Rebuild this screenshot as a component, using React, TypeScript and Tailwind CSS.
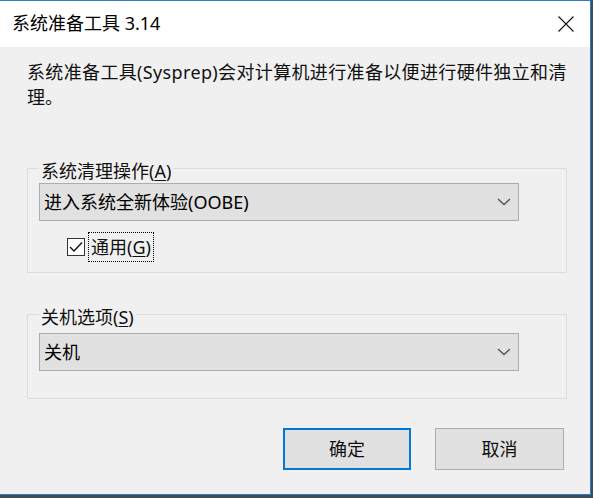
import React from "react";

const font = { fontFamily: '"Noto Sans", "Noto Sans CJK SC", sans-serif' };

function Chevron() {
  return (
    <svg width="14" height="8" viewBox="0 0 14 8" fill="none">
      <path d="M1 1 L7 6.5 L13 1" stroke="#555" strokeWidth="1.4" />
    </svg>
  );
}

function Combo({ text }: { text: string }) {
  return (
    <div className="w-[480px] h-[38px] border border-[#adadad] bg-[#e1e1e1] flex items-center justify-between pl-[4px] pr-[7px]">
      <span className="text-[18px] leading-[24px] text-black">{text}</span>
      <Chevron />
    </div>
  );
}

export default function App() {
  return (
    <div className="w-[593px] h-[498px] bg-[#3f4d59] overflow-hidden" style={font}>
      <div className="w-[591px] h-[495px] border-t border-r border-b border-[#2b7bc9] bg-[#f0f0f0] flex flex-col">
        <div className="h-[46px] bg-white flex items-start justify-between pl-[12px] pr-[16px] shrink-0">
          <span className="text-[18px] leading-[24px] mt-[10px] text-black">系统准备工具 3.14</span>
          <svg width="16" height="16" viewBox="0 0 16 16" className="mt-[15px]">
            <path d="M0.5 0.5 L15.5 15.5 M15.5 0.5 L0.5 15.5" stroke="#111" strokeWidth="1.1" />
          </svg>
        </div>
        <div className="pl-[27px] pt-[13px] flex flex-col">
          <p className="text-[18px] leading-[25px] text-[#111]">
            <span className="block whitespace-nowrap tracking-[0.35px]">系统准备工具(Sysprep)会对计算机进行准备以便进行硬件独立和清</span>
            <span className="block whitespace-nowrap">理。</span>
          </p>

          <fieldset className="mt-[43px] w-[540px] border border-[#dcdcdc] pl-[11px] pr-[46px] pb-[10px]">
            <legend className="px-[2px] pt-[6px] text-[18px] leading-[24px] text-[#111]">
              系统清理操作(<span className="underline underline-offset-2">A</span>)
            </legend>
            <Combo text="进入系统全新体验(OOBE)" />
            <div className="mt-[11px] h-[30px] ml-[28px] flex items-center">
              <span className="w-[18px] h-[18px] border border-[#333] bg-white flex items-center justify-center">
                <svg width="14" height="12" viewBox="0 0 14 12" fill="none">
                  <path d="M1 6 L5 10 L13 1.5" stroke="#111" strokeWidth="1.4" />
                </svg>
              </span>
              <span className="ml-[3px] h-[30px] border border-dotted border-black px-[2px] flex items-center text-[18px] leading-[24px] text-[#111]">
                通用(<span className="underline underline-offset-2">G</span>)
              </span>
            </div>
          </fieldset>

          <fieldset className="mt-[26px] w-[540px] border border-[#dcdcdc] pl-[11px] pr-[46px] pb-[27px]">
            <legend className="px-[2px] pt-[6px] text-[18px] leading-[24px] text-[#111]">
              关机选项(<span className="underline underline-offset-2">S</span>)
            </legend>
            <div className="mt-[4px]">
              <Combo text="关机" />
            </div>
          </fieldset>
        </div>

        <div className="mt-[29px] flex justify-end pr-[26px] gap-[24px]">
          <button className="w-[128px] h-[42px] border-2 border-[#0078d7] bg-[#e1e1e1] text-[18px] leading-[24px] text-[#111]">
            确定
          </button>
          <button className="w-[129px] h-[42px] border border-[#adadad] bg-[#e1e1e1] text-[18px] leading-[24px] text-[#111]">
            取消
          </button>
        </div>
      </div>
    </div>
  );
}
